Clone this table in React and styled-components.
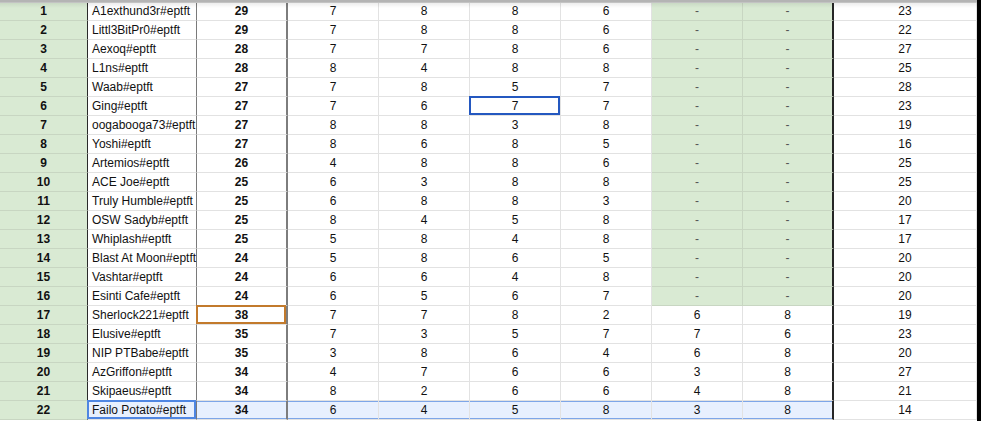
import React from "react";
import styled, { createGlobalStyle, css } from "styled-components";

const Global = createGlobalStyle`
  html, body { margin: 0; padding: 0; background: #fff; }
  body { font-family: "Liberation Sans", Arial, sans-serif; font-size: 12px; color: #000; overflow: hidden; }
`;

const GREEN = "#d9ead3";
const GRID = "#e2e2e2";
const GREEN_GRID = "#c8d6c2";

const Page = styled.div`
  display: flex;
  width: 981px;
  height: 421px;
  position: relative;
  overflow: hidden;
`;

const Sheet = styled.div`
  width: 977px;
  padding-top: 2px;
  display: grid;
  grid-template-columns: 88px 109px 91px 91px 91px 91px 91px 91px 91px 143px;
  grid-auto-rows: 19px;
`;

const RightEdge = styled.div`
  flex: 1;
  background: #000;
`;

const TopShade = styled.div`
  position: absolute;
  left: 0;
  top: 0;
  width: 977px;
  height: 8px;
  pointer-events: none;
  background: linear-gradient(
    #b4b4b4 0,
    #b4b4b4 2px,
    #d2d2d2 3px,
    rgba(0, 0, 0, 0.07) 3px,
    rgba(0, 0, 0, 0) 8px
  );
`;

const rightBorders = {
  0: "1px solid #2a2a2a",
  1: "1px solid #7a7a7a",
  2: "2px solid #7d7d7d",
  8: "2px solid #262626",
};

const Cell = styled.div`
  position: relative;
  box-sizing: border-box;
  display: flex;
  align-items: center;
  justify-content: ${(p) => (p.$left ? "flex-start" : "center")};
  padding: ${(p) => (p.$left ? "0 0 0 4px" : "0")};
  white-space: nowrap;
  overflow: visible;
  font-weight: ${(p) => (p.$bold ? 700 : 400)};
  color: ${(p) => (p.$dash ? "#555" : "#111")};
  background: ${(p) => (p.$band ? "#e8f0fe" : p.$green ? GREEN : "#fff")};
  border-bottom: 1px solid ${(p) => (p.$green ? GREEN_GRID : GRID)};
  border-right: ${(p) =>
    rightBorders[p.$col] || `1px solid ${p.$green ? GREEN_GRID : GRID}`};
  ${(p) =>
    p.$band &&
    css`
      box-shadow: inset 0 1px 0 #7ea6e8, inset 0 -1px 0 #7ea6e8;
    `}
  ${(p) =>
    p.$focus &&
    css`
      z-index: 2;
      &::after {
        content: "";
        position: absolute;
        inset: -1px 0 0 -1px;
        border: 2px solid ${p.$focus};
        pointer-events: none;
      }
    `}
`;

const data = [
  ["A1exthund3r#eptft", 29, 7, 8, 8, 6, "-", "-", 23],
  ["Littl3BitPr0#eptft", 29, 7, 8, 8, 6, "-", "-", 22],
  ["Aexoq#eptft", 28, 7, 7, 8, 6, "-", "-", 27],
  ["L1ns#eptft", 28, 8, 4, 8, 8, "-", "-", 25],
  ["Waab#eptft", 27, 7, 8, 5, 7, "-", "-", 28],
  ["Ging#eptft", 27, 7, 6, 7, 7, "-", "-", 23],
  ["oogabooga73#eptft", 27, 8, 8, 3, 8, "-", "-", 19],
  ["Yoshi#eptft", 27, 8, 6, 8, 5, "-", "-", 16],
  ["Artemios#eptft", 26, 4, 8, 8, 6, "-", "-", 25],
  ["ACE Joe#eptft", 25, 6, 3, 8, 8, "-", "-", 25],
  ["Truly Humble#eptft", 25, 6, 8, 8, 3, "-", "-", 20],
  ["OSW Sadyb#eptft", 25, 8, 4, 5, 8, "-", "-", 17],
  ["Whiplash#eptft", 25, 5, 8, 4, 8, "-", "-", 17],
  ["Blast At Moon#eptft", 24, 5, 8, 6, 5, "-", "-", 20],
  ["Vashtar#eptft", 24, 6, 6, 4, 8, "-", "-", 20],
  ["Esinti Cafe#eptft", 24, 6, 5, 6, 7, "-", "-", 20],
  ["Sherlock221#eptft", 38, 7, 7, 8, 2, 6, 8, 19],
  ["Elusive#eptft", 35, 7, 3, 5, 7, 7, 6, 23],
  ["NIP PTBabe#eptft", 35, 3, 8, 6, 4, 6, 8, 20],
  ["AzGriffon#eptft", 34, 4, 7, 6, 6, 3, 8, 27],
  ["Skipaeus#eptft", 34, 8, 2, 6, 6, 4, 8, 21],
  ["Failo Potato#eptft", 34, 6, 4, 5, 8, 3, 8, 14],
];

const focusMap = {
  "5-5": "#2458c0",
  "16-2": "#c27a2c",
  "21-1": "#4f86e2",
};

export default function App() {
  return (
    <Page>
      <Global />
      <Sheet>
        {data.map((row, r) => {
          const cells = [r + 1, ...row];
          const band = r === 21;
          return cells.map((v, c) => {
            const green = c === 0 || ((c === 7 || c === 8) && v === "-");
            return (
              <Cell
                key={`${r}-${c}`}
                $col={c}
                $left={c === 1}
                $bold={c === 0 || c === 2}
                $green={green && !(band && c !== 0)}
                $dash={v === "-"}
                $band={band && c >= 1 && c <= 8}
                $focus={focusMap[`${r}-${c}`]}
              >
                {v}
              </Cell>
            );
          });
        })}
      </Sheet>
      <RightEdge />
      <TopShade />
    </Page>
  );
}
